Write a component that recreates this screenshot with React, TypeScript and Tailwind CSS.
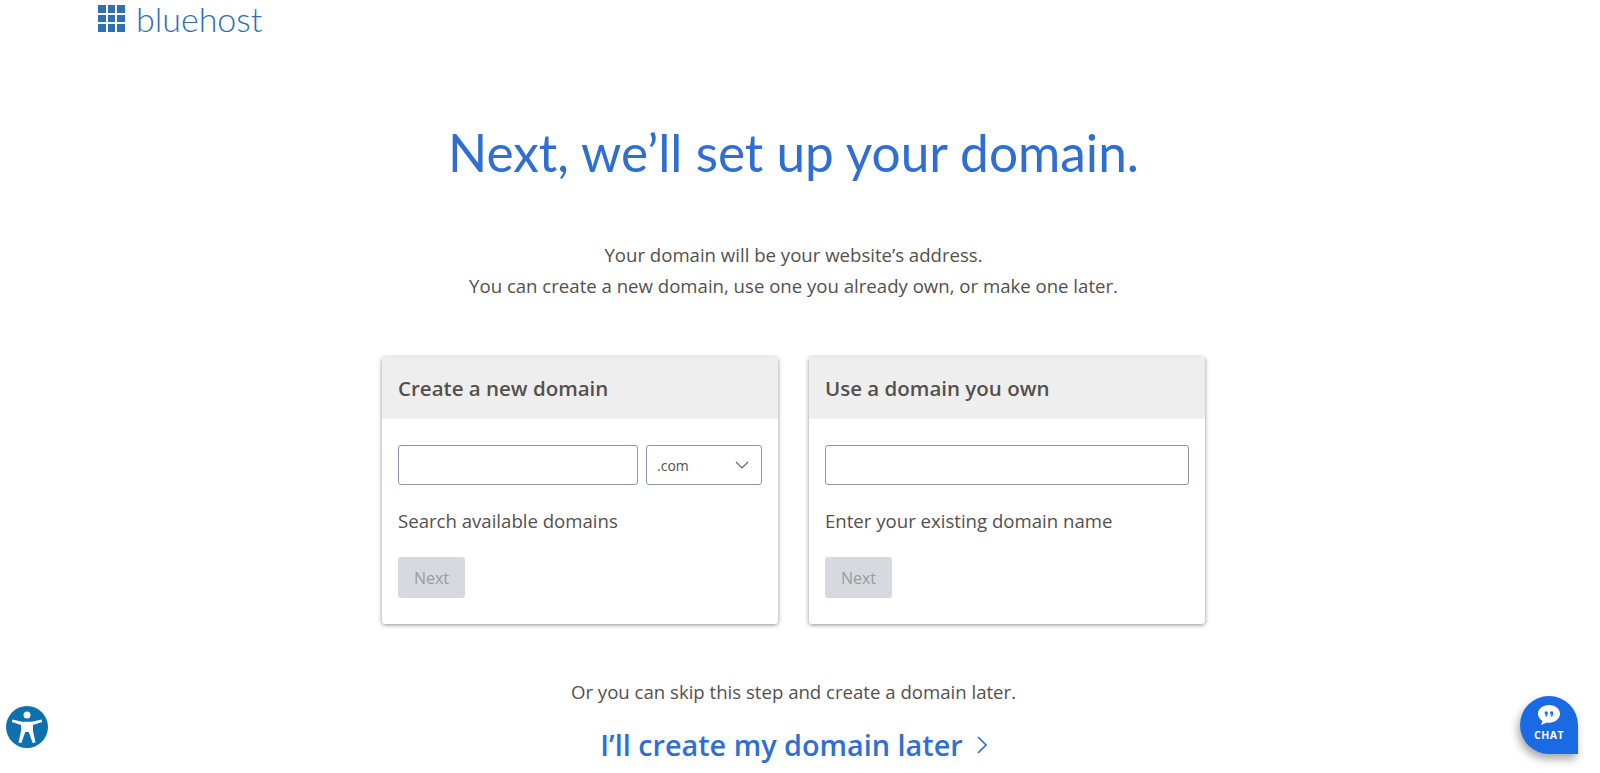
import React from "react";

const openSans = "font-['Open_Sans',sans-serif]";

const LogoGrid = () => (
  <div className="grid grid-cols-3 gap-[2px] w-[27px] h-[27px] mt-[1px]">
    {[0, 1, 2, 3, 4, 5, 6, 7, 8].map((i) => (
      <div key={i} className="bg-[#2f6fb8]" />
    ))}
  </div>
);

const Chevron = ({ className }: { className: string }) => (
  <svg viewBox="0 0 14 8" className={className} fill="none" stroke="currentColor" strokeWidth="1.2">
    <path d="M1 1l6 6 6-6" />
  </svg>
);

const AccessIcon = () => (
  <svg viewBox="0 0 42 42" className="w-[42px] h-[42px]">
    <circle cx="21" cy="21" r="21" fill="#0f70b0" />
    <circle cx="21" cy="9" r="3.500" fill="#fff" />
    <path
      d="M6.500 13.500l9.500 2.300h10l9.500-2.300 .7 2.500-9.200 3v6l2.500 11.500-2.800 .6-4-11.200h-3.400l-4 11.200-2.800-.6L15 25v-6L5.800 16z"
      fill="#fff"
    />
  </svg>
);

const ChatIcon = () => (
  <svg viewBox="0 0 24 22" className="w-[24px] h-[22px]">
    <path
      d="M12 1C5.900 1 1 4.900 1 9.800c0 3 1.800 5.500 4.500 7.100L4 21l6-2.500c.7 .1 1.300 .2 2 .2 6.100 0 11-3.900 11-8.900S18.100 1 12 1z"
      fill="#fff"
    />
    <path
      d="M7.800 7.500h2.800v2.700c0 1.400-.9 2.300-2.200 2.500v-1.200c.5-.1 .9-.5 .9-1H7.800zM13.200 7.500H16v2.700c0 1.400-.9 2.300-2.200 2.500v-1.200c.5-.1 .9-.5 .9-1h-1.500z"
      fill="#1a6ae4"
    />
  </svg>
);

const Card = ({
  title,
  hint,
  children,
}: {
  title: string;
  hint: string;
  children: React.ReactNode;
}) => (
  <div className="w-[396px] h-[267px] rounded-[3px] bg-white shadow-[0_1px_4px_rgba(0,0,0,0.45)] overflow-hidden">
    <div className="h-[62px] bg-[#eeeeee] px-4 flex items-center text-[20.500px] font-semibold text-[#54504d]">{title}</div>
    <div className="px-4 pt-[26px]">
      <div className="flex gap-2">{children}</div>
      <p className="mt-[23px] text-[18.600px] leading-[26px] text-[#54504d]">{hint}</p>
      <button className="mt-[23px] w-[67px] h-[41px] rounded-[3px] bg-[#d6d9de] text-[16px] text-[#999b9e]">Next</button>
    </div>
  </div>
);

export default function App() {
  return (
    <div className={`relative w-full h-[773px] overflow-hidden bg-white ${openSans}`}>
      <div className="w-[1587px]">
        <header className="h-[40px] pl-[98px] pt-[4px] flex items-start gap-[11px]">
          <LogoGrid />
          <span className="font-['Lato',sans-serif] font-light text-[34px] leading-[30px] text-[#2f6fb8]">bluehost</span>
        </header>
        <h1 className="mt-[79px] text-center font-['Lato',sans-serif] text-[51.400px] leading-[66px] text-[#2f6fd3]">
          Next, we’ll set up your domain.
        </h1>
        <div className="mt-[54px] text-center text-[18.600px] leading-[31px] text-[#54504d]">
          <p>Your domain will be your website’s address.</p>
          <p>You can create a new domain, use one you already own, or make one later.</p>
        </div>
        <div className="mt-[56px] flex justify-center gap-[31px]">
          <Card title="Create a new domain" hint="Search available domains">
            <input className="w-[240px] h-[40px] rounded-[3px] border border-[#8c97ad] bg-white" />
            <div className="w-[116px] h-[40px] rounded-[3px] border border-[#8c97ad] pl-[10px] pr-[12px] flex items-center justify-between text-[14px] text-[#54504d]">
              <span>.com</span>
              <Chevron className="w-[14px] h-[8px] text-[#5d6b85]" />
            </div>
          </Card>
          <Card title="Use a domain you own" hint="Enter your existing domain name">
            <input className="w-[364px] h-[40px] rounded-[3px] border border-[#8c97ad] bg-white" />
          </Card>
        </div>
        <p className="mt-[55px] text-center text-[18.600px] leading-[26px] text-[#54504d]">
          Or you can skip this step and create a domain later.
        </p>
        <a className="mt-[21px] flex items-center justify-center gap-[14px] text-[28.800px] leading-[38px] font-semibold text-[#2f6fd3]">
          I’ll create my domain later
          <svg viewBox="0 0 10 18" className="w-[10px] h-[18px]" fill="none" stroke="currentColor" strokeWidth="1.700">
            <path d="M1 1l8 8-8 8" />
          </svg>
        </a>
      </div>
      <div className="absolute left-[6px] top-[706px]">
        <AccessIcon />
      </div>
      <div className="absolute left-[1520px] top-[696px] w-[58px] h-[58px] rounded-[29px_29px_0_29px] bg-[#1a6ae4] shadow-[-2px_5px_8px_rgba(0,0,0,0.35)] flex flex-col items-center pt-[8px]">
        <ChatIcon />
        <span className="font-['Open_Sans',sans-serif] text-[10.500px] leading-[12px] font-bold tracking-[0.5px] text-white mt-[3px]">CHAT</span>
      </div>
    </div>
  );
}
